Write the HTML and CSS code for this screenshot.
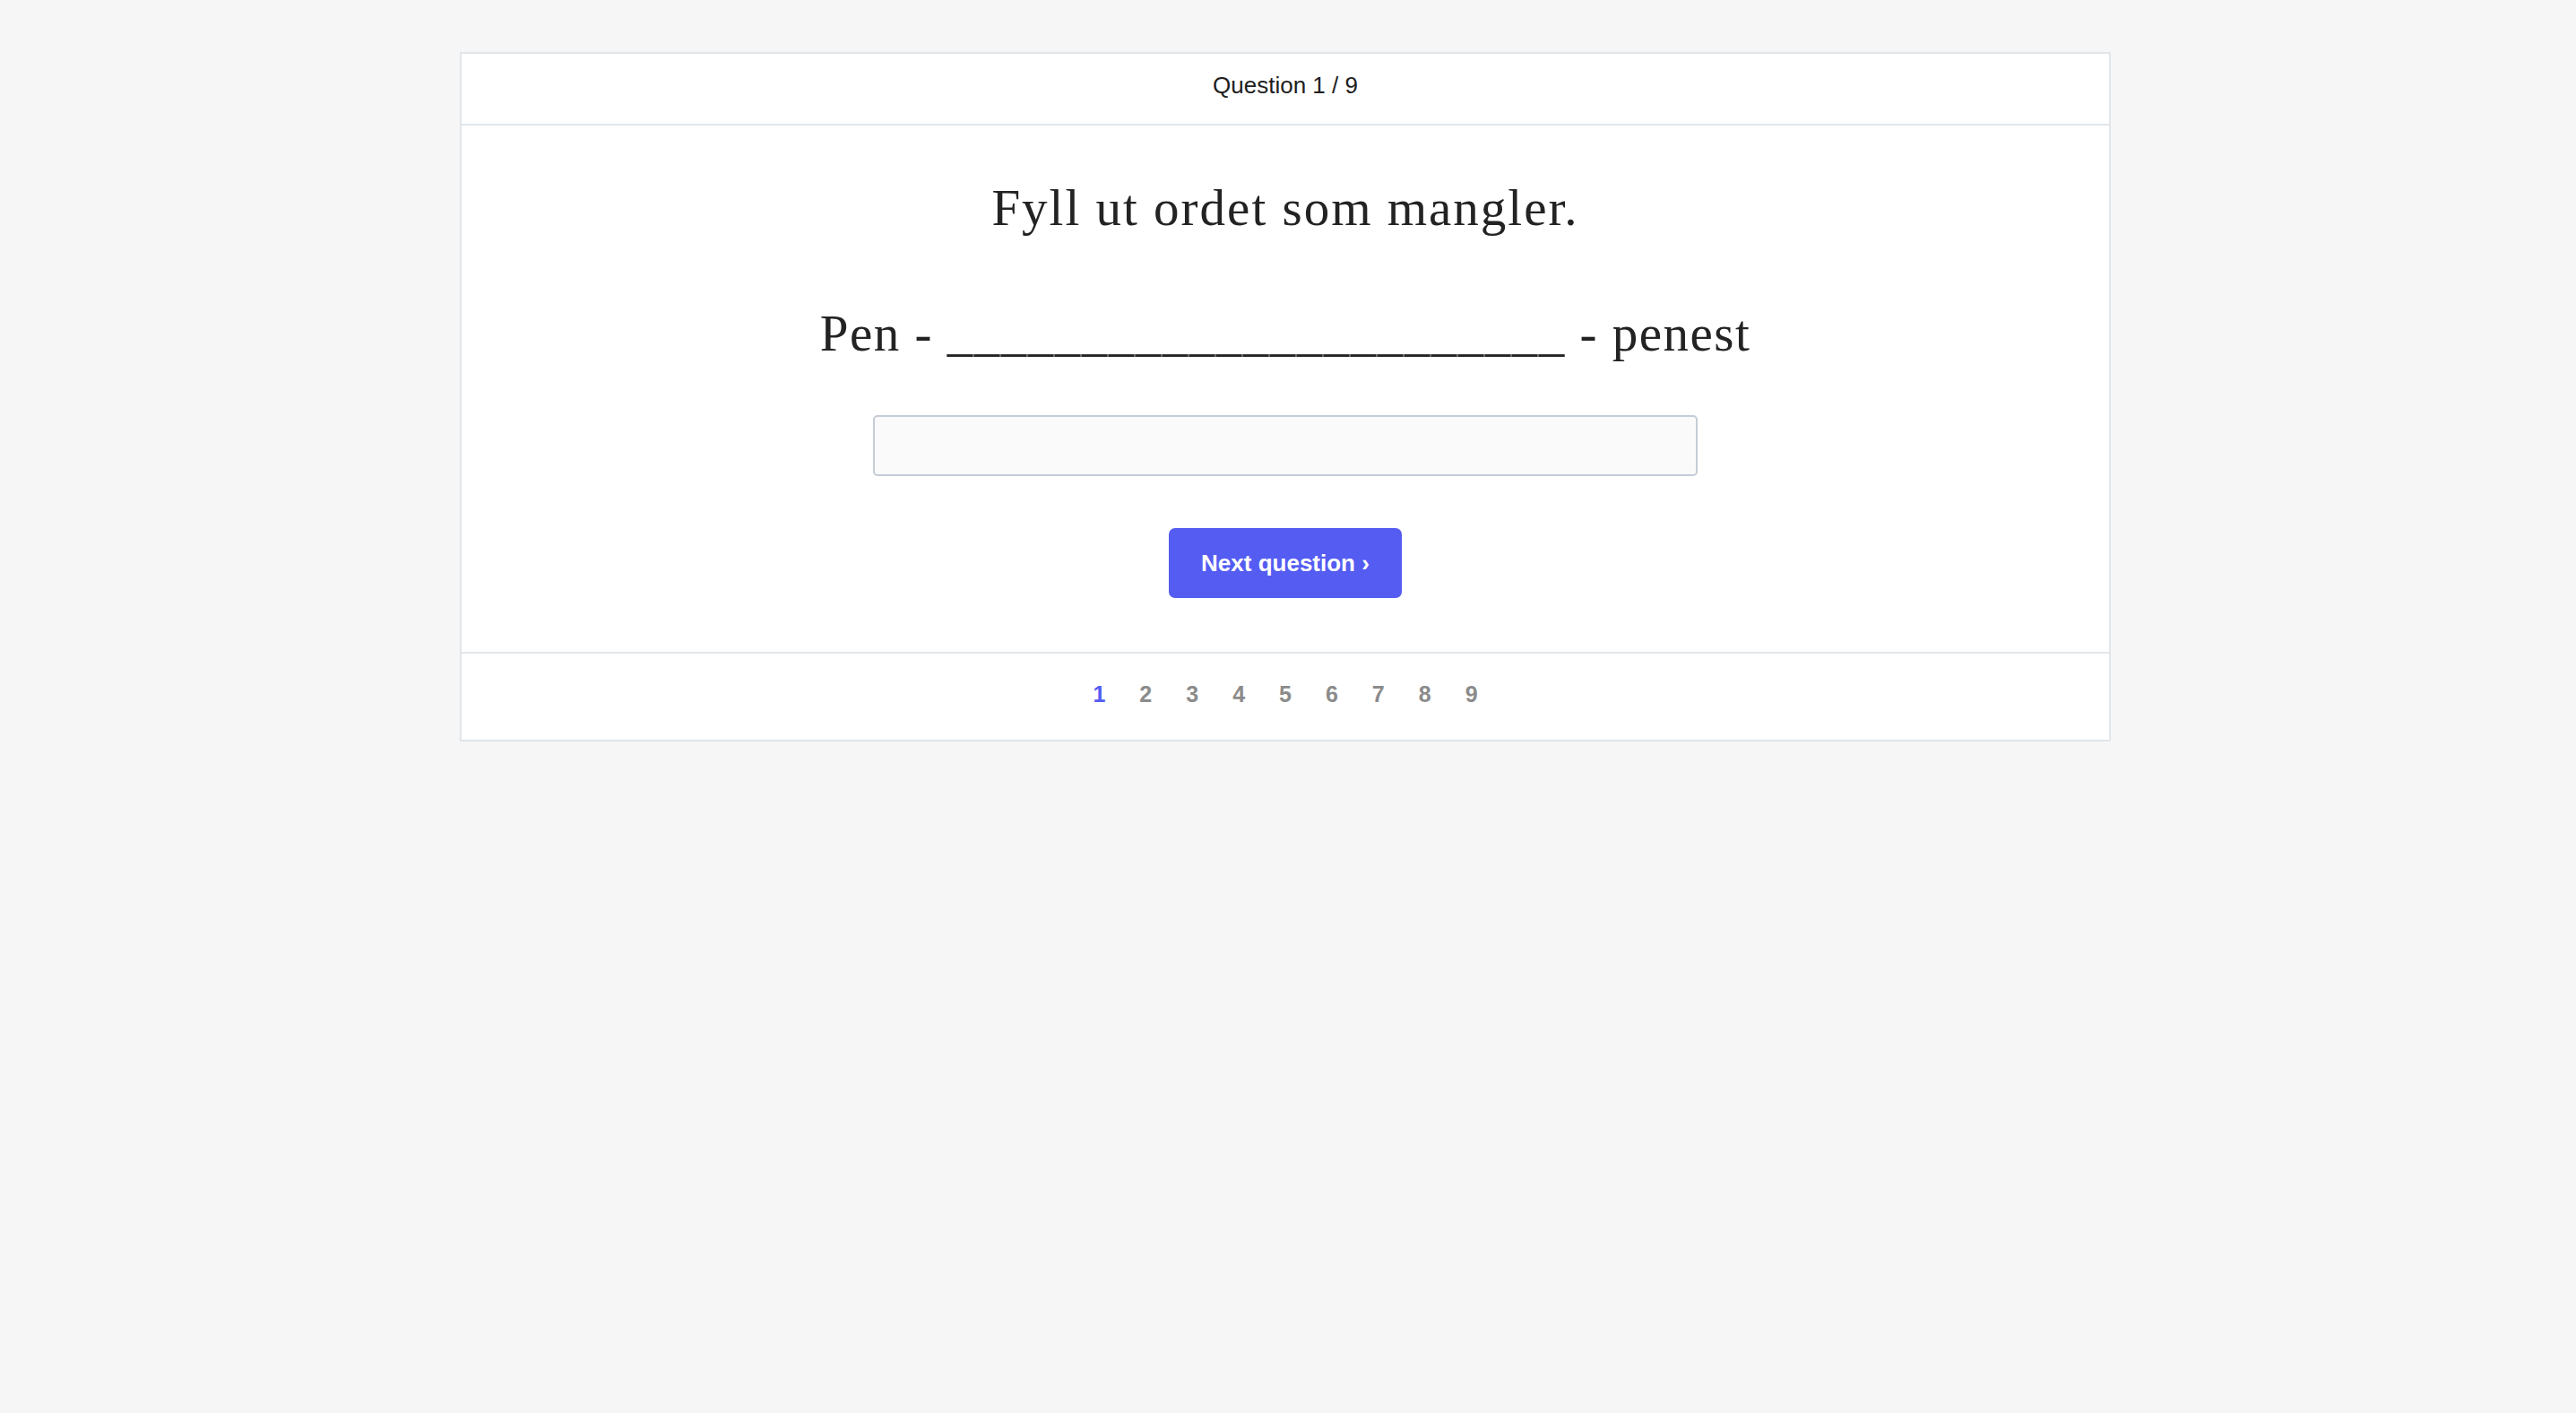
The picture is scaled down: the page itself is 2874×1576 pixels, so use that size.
FILE: index.html
```html
<!DOCTYPE html>
<html lang="no">

<head>
    <meta charset="UTF-8">
    <meta name="viewport" content="width=device-width, initial-scale=1.0">
    <title>Quiz</title>
    <link rel="stylesheet" href="styles.css">
</head>

<body>
    <div class="quiz">
        <div class="quiz-header">Question 1 / 9</div>

        <div class="quiz-body">
            <h1 class="task">Fyll ut ordet som mangler.</h1>
            <p class="sentence">Pen - <span class="blank">_______________________</span> - penest</p>

            <input type="text" class="answer" id="answer">

            <button class="next">Next question ›</button>
        </div>

        <div class="quiz-footer">
            <span class="step active">1</span>
            <span class="step">2</span>
            <span class="step">3</span>
            <span class="step">4</span>
            <span class="step">5</span>
            <span class="step">6</span>
            <span class="step">7</span>
            <span class="step">8</span>
            <span class="step">9</span>
        </div>
    </div>
</body>

</html>
```

FILE: styles.css
```css
body {
    margin: 0;
    padding: 58px 6px 58px 0;
    background-color: #f6f6f6;
    font-family: "Liberation Sans", Arial, sans-serif;
}

.quiz {
    max-width: 1838px;
    margin: 0 auto;
    background-color: white;
    border: 2px solid #e1e6ea;
}

.quiz-header {
    height: 80px;
    display: flex;
    align-items: center;
    justify-content: center;
    padding-bottom: 8px;
    box-sizing: border-box;
    font-size: 26px;
    color: #1e1e1e;
    border-bottom: 2px solid #e1e6ea;
}

.quiz-body {
    display: flex;
    flex-direction: column;
    align-items: center;
    padding: 58px 0 60px;
}

.task,
.sentence {
    margin: 0;
    font-family: "Liberation Serif", "Times New Roman", serif;
    font-size: 57px;
    font-weight: normal;
    line-height: 67px;
    letter-spacing: 1.5px;
    color: #232323;
}

.task {
    letter-spacing: 2px;
}

.sentence {
    margin-top: 73px;
}

.answer {
    box-sizing: border-box;
    width: 920px;
    height: 68px;
    margin-top: 58px;
    padding: 0 16px;
    font-size: 26px;
    background-color: #fafafa;
    border: 2px solid #c4ccd6;
    border-radius: 5px;
}

.next {
    margin-top: 58px;
    width: 260px;
    height: 78px;
    background-color: #545cf2;
    color: white;
    font-family: "Liberation Sans", Arial, sans-serif;
    font-size: 26px;
    font-weight: bold;
    border: none;
    border-radius: 7px;
    cursor: pointer;
}

.quiz-footer {
    height: 98px;
    display: flex;
    align-items: center;
    justify-content: center;
    gap: 38px;
    padding-bottom: 6px;
    box-sizing: border-box;
    border-top: 2px solid #e1e6ea;
}

.step {
    font-size: 25px;
    font-weight: bold;
    color: #8b8b8b;
}

.step.active {
    color: #545cf2;
}
```
